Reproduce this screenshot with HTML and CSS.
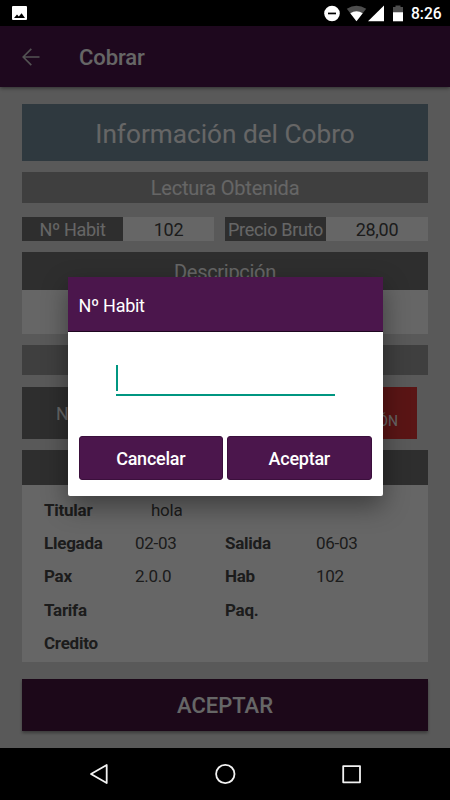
FILE: index.html
```html
<!DOCTYPE html>
<html lang="es">
<head>
    <meta charset="UTF-8" />
    <meta name="viewport" content="width=device-width, initial-scale=1.0"/>
    <title>Cobrar</title>
    <link rel="stylesheet" href="styles.css">
</head>
<body>
    <div class="status-bar">
        <svg class="status-photo" width="15" height="14" viewBox="0 0 15 14">
            <rect width="15" height="14" rx="1" fill="#fff"/>
            <path d="M2 12 L5 8.6 L6.8 10.6 L9.6 7.2 L13 12 Z" fill="#000"/>
        </svg>
        <svg width="84" height="17" viewBox="0 0 84 17">
            <circle cx="8" cy="8.5" r="7.8" fill="#fff"/>
            <rect x="4" y="7.6" width="8" height="1.7" fill="#000"/>
            <path d="M22.8 3.8 Q32.5 -2.2 42.2 3.8 L32.5 16.3 Z" fill="#4d4d4d"/>
            <path d="M26.3 8.2 Q32.5 4.2 38.7 8.2 L32.5 16.3 Z" fill="#fff"/>
            <path d="M60 .5 V16.3 H44 Z" fill="#fff"/>
            <path d="M69 2 H71.5 V.5 H76.5 V2 H79 V7.2 H69 Z" fill="#4d4d4d"/>
            <path d="M69 7.2 H79 V16.3 H69 Z" fill="#fff"/>
        </svg>
        <span class="clock">8:26</span>
    </div>

    <div class="screen">
        <div class="app-bar">
            <svg width="18" height="18" viewBox="0 0 18 18">
                <path d="M17.5 9 H1.2 M9.3 .9 L1.2 9 L9.3 17.1" fill="none" stroke="#d0d0d0" stroke-width="1.6"/>
            </svg>
            <h1>Cobrar</h1>
        </div>

        <div class="content">
            <div class="title">Información del Cobro</div>
            <div class="subtitle">Lectura Obtenida</div>
            <div class="reading">
                <div class="field"><span class="label">Nº Habit</span><span class="value">102</span></div>
                <div class="field"><span class="label">Precio Bruto</span><span class="value">28,00</span></div>
            </div>
            <div class="description-head">Descripción</div>
            <div class="description"></div>
            <div class="section-bar"></div>
            <div class="actions">
                <div class="room-btn">Nº Habit</div>
                <div class="room-red">HABITACIÓN</div>
            </div>
            <div class="details-head"></div>
            <div class="details">
                <b>Titular</b><span class="name">hola</span><b></b><span></span>
                <b>Llegada</b><span>02-03</span><b>Salida</b><span>06-03</span>
                <b>Pax</b><span>2.0.0</span><b>Hab</b><span>102</span>
                <b>Tarifa</b><span></span><b>Paq.</b><span></span>
                <b>Credito</b><span></span><b></b><span></span>
            </div>
            <div class="submit">ACEPTAR</div>
        </div>

        <div class="overlay">
            <div class="dialog">
                <div class="dialog-title">Nº Habit</div>
                <div class="dialog-body">
                    <div class="input"><span class="caret"></span></div>
                    <div class="dialog-buttons">
                        <button>Cancelar</button>
                        <button>Aceptar</button>
                    </div>
                </div>
            </div>
        </div>
    </div>

    <div class="nav-bar">
        <svg width="450" height="52" viewBox="0 0 450 52" fill="none" stroke="#f2f2f2" stroke-width="1.8" stroke-linejoin="round">
            <path d="M106.7 17 V35 L91 26 Z"/>
            <circle cx="225.3" cy="26" r="9.2"/>
            <rect x="343.2" y="18.1" width="16.8" height="16.2"/>
        </svg>
    </div>
</body>
</html>
```
FILE: styles.css
```css
* {
    box-sizing: border-box;
}
body {
    margin: 0;
    width: 450px;
    height: 800px;
    overflow: hidden;
    display: flex;
    flex-direction: column;
    background: #000;
    font-family: Roboto, sans-serif;
    color: #484848;
}
.status-bar {
    height: 26px;
    display: flex;
    align-items: center;
    padding: 0 9px 0 12px;
    color: #fff;
}
.status-photo {
    margin-right: auto;
}
.clock {
    width: 30px;
    margin-left: 3px;
    font-size: 15.6px;
    font-weight: 500;
    line-height: 26px;
    padding-top: 2px;
}
.screen {
    position: relative;
    height: 722px;
    background: #dfdfdf;
}
.app-bar {
    height: 61px;
    display: flex;
    align-items: center;
    gap: 39px;
    padding-left: 22px;
    background: #4d144d;
    color: #fff;
    box-shadow: 0 1px 4px rgba(0,0,0,0.5);
}
.app-bar h1 {
    margin: 2px 0 0 0;
    font-size: 22px;
    font-weight: 500;
    letter-spacing: -0.1px;
}
.content {
    padding: 17px 22px 0 22px;
    display: flex;
    flex-direction: column;
}
.title {
    height: 57px;
    line-height: 60px;
    background: #768e9e;
    color: #fff;
    font-size: 26.2px;
    text-align: center;
}
.subtitle {
    height: 31px;
    line-height: 33px;
    margin-top: 11px;
    background: #9e9e9e;
    color: #fff;
    font-size: 20px;
    letter-spacing: -0.2px;
    text-align: center;
}
.reading {
    display: flex;
    margin-top: 14px;
    gap: 11px;
    height: 24px;
    line-height: 26px;
    font-size: 18px;
    letter-spacing: -0.3px;
    text-align: center;
}
.field {
    display: flex;
    width: 192px;
}
.field:last-child {
    width: 203px;
}
.label {
    width: 101px;
    background: #737373;
    color: #fff;
    white-space: nowrap;
}
.value {
    flex: 1;
    background: #fff;
}
.description-head {
    height: 38px;
    line-height: 40px;
    margin-top: 11px;
    background: #737373;
    color: #fff;
    font-size: 20px;
    letter-spacing: -0.3px;
    text-align: center;
}
.description {
    height: 44px;
    background: #fff;
}
.section-bar {
    height: 30px;
    margin-top: 11px;
    background: #9e9e9e;
}
.actions {
    display: flex;
    justify-content: space-between;
    height: 52px;
    margin: 12px 11px 0 0;
    color: #fff;
}
.room-btn {
    width: 190px;
    padding-left: 34px;
    background: #737373;
    font-size: 18px;
    line-height: 54px;
}
.room-red {
    width: 190px;
    padding: 16px 19px 0 0;
    background: #e13535;
    font-size: 14px;
    line-height: 36px;
    text-align: right;
}
.details-head {
    height: 35px;
    margin-top: 11px;
    background: #737373;
}
.details {
    display: grid;
    grid-template-columns: 91px 90px 91px 90px;
    grid-auto-rows: 33.2px;
    height: 177px;
    padding: 9px 0 0 22px;
    background: #fff;
    font-size: 17px;
    letter-spacing: -0.25px;
    line-height: 33px;
}
.details b {
    font-weight: 700;
}
.details .name {
    padding-left: 16px;
}
.submit {
    height: 52px;
    line-height: 54px;
    margin-top: 17px;
    background: #46143f;
    color: #fff;
    font-size: 22px;
    font-weight: 500;
    text-align: center;
    box-shadow: 0 2px 3px rgba(0,0,0,0.35);
}
/* dims the whole screen below the status bar */
.overlay {
    position: absolute;
    inset: 0;
    display: flex;
    justify-content: center;
    align-items: flex-start;
    padding-top: 251px;
    background: rgba(0,0,0,0.6);
}
.dialog {
    width: 315px;
    height: 219px;
    overflow: hidden;
    border-radius: 0 0 2px 2px;
    background: #fff;
    box-shadow: 0 10px 26px rgba(0,0,0,0.4);
}
.dialog-title {
    height: 55px;
    line-height: 58px;
    padding-left: 11px;
    background: #4b164c;
    border-bottom: 1px solid #1e061f;
    color: #fff;
    font-size: 18px;
    letter-spacing: -0.3px;
}
.dialog-body {
    padding: 33px 11px 0 11px;
}
.input {
    height: 31px;
    margin: 0 37px;
    border-bottom: 2px solid #009681;
}
.caret {
    display: block;
    width: 2px;
    height: 26px;
    background: #009681;
}
.dialog-buttons {
    display: flex;
    gap: 4px;
    margin-top: 40px;
}
.dialog-buttons button {
    flex: 1;
    height: 44px;
    padding: 1px 0 0 0;
    border: 1px solid #3b0f3c;
    border-radius: 3px;
    background: #4b164c;
    color: #fff;
    font-family: inherit;
    font-size: 18px;
    letter-spacing: -0.25px;
    font-weight: 500;
}
.nav-bar {
    height: 52px;
}
```
